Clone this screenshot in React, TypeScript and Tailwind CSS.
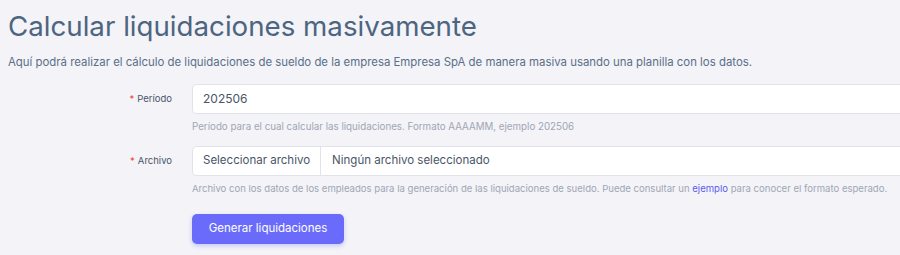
import React from "react";

export default function App() {
  return (
    <div className="min-h-[255px] w-[900px] overflow-hidden bg-[#f3f3f8] px-2 pt-[6px]" style={{ fontFamily: "Inter, 'Noto Sans', sans-serif" }}>
      <h1 className="whitespace-nowrap text-[27.7px] leading-[40px] text-[#4c6580]">Calcular liquidaciones masivamente</h1>
      <p className="mt-[8px] whitespace-nowrap text-[11.4px] leading-[16px] text-[#5a6f88]">
        Aquí podrá realizar el cálculo de liquidaciones de sueldo de la empresa Empresa SpA de manera masiva usando una planilla con los datos.
      </p>
      <div className="mt-[14px] flex flex-col">
        <div className="flex">
          <div className="flex w-[184px] shrink-0 justify-end pr-[20px] pt-[9px]">
            <span className="text-[9.5px] leading-[12px] text-[#4a5568]"><span className="mr-[3px] text-[#ef4444]">*</span>Período</span>
          </div>
          <div className="flex flex-col">
            <div className="flex h-[30px] w-[720px] items-center rounded-[4px] border border-[#e2e2ea] bg-white px-[10px] text-[12px] text-[#4a5568]">202506</div>
            <div className="mt-[6px] whitespace-nowrap text-[9.75px] leading-[14px] text-[#a0a6b4]">Período para el cual calcular las liquidaciones. Formato AAAAMM, ejemplo 202506</div>
          </div>
        </div>
        <div className="mt-[12px] flex">
          <div className="flex w-[184px] shrink-0 justify-end pr-[20px] pt-[9px]">
            <span className="text-[9.5px] leading-[12px] text-[#4a5568]"><span className="mr-[3px] text-[#ef4444]">*</span>Archivo</span>
          </div>
          <div className="flex flex-col">
            <div className="flex h-[30px] w-[720px] items-center rounded-[4px] border border-[#e2e2ea] bg-white text-[11.5px] text-[#4a5568]">
              <div className="flex h-full items-center border-r border-[#e2e2ea] px-[10px]">Seleccionar archivo</div>
              <div className="px-[11px]">Ningún archivo seleccionado</div>
            </div>
            <div className="mt-[6px] whitespace-nowrap text-[9.55px] leading-[14px] text-[#a0a6b4]">
              Archivo con los datos de los empleados para la generación de las liquidaciones de sueldo. Puede consultar un <span className="text-[#5b5bf0]">ejemplo</span> para conocer el formato esperado.
            </div>
          </div>
        </div>
        <div className="mt-[18px] flex">
          <div className="w-[184px] shrink-0" />
          <button className="h-[30px] w-[152px] rounded-[5px] bg-[#6b6bfb] text-[11.5px] text-white shadow-[0_2px_4px_rgba(99,102,241,0.3)]">Generar liquidaciones</button>
        </div>
      </div>
    </div>
  );
}
